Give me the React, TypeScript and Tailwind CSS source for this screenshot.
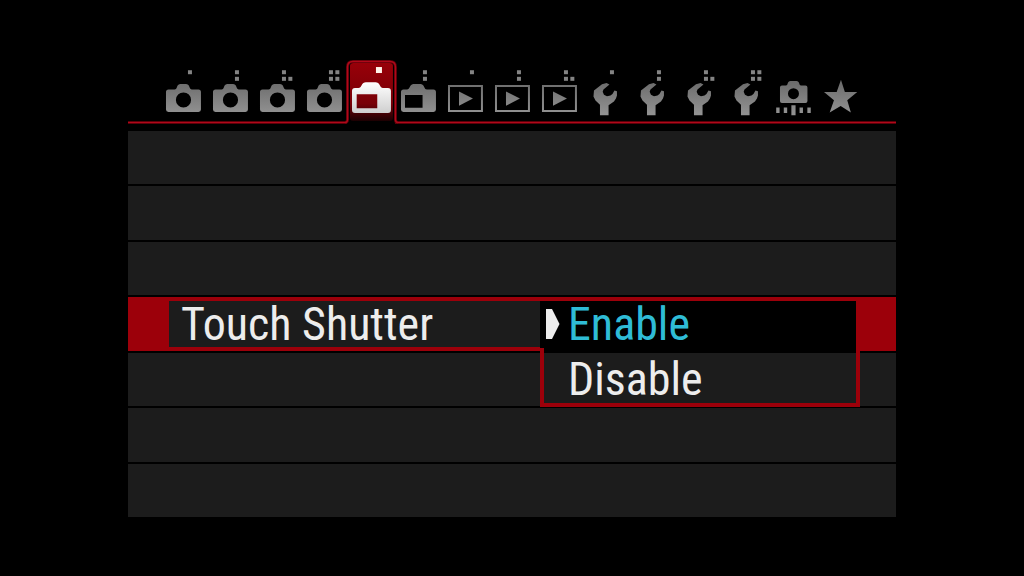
import { useState } from "react";

type IconKind = "camera" | "live" | "play" | "wrench" | "function" | "star";

interface Tab {
  icon: IconKind;
  page: number;
  label: string;
}

const tabs: Tab[] = [
  { icon: "camera", page: 1, label: "Shooting 1" },
  { icon: "camera", page: 2, label: "Shooting 2" },
  { icon: "camera", page: 3, label: "Shooting 3" },
  { icon: "camera", page: 4, label: "Shooting 4" },
  { icon: "live", page: 1, label: "Live View 1" },
  { icon: "live", page: 2, label: "Live View 2" },
  { icon: "play", page: 1, label: "Playback 1" },
  { icon: "play", page: 2, label: "Playback 2" },
  { icon: "play", page: 3, label: "Playback 3" },
  { icon: "wrench", page: 1, label: "Setup 1" },
  { icon: "wrench", page: 2, label: "Setup 2" },
  { icon: "wrench", page: 3, label: "Setup 3" },
  { icon: "wrench", page: 4, label: "Setup 4" },
  { icon: "function", page: 0, label: "Display level" },
  { icon: "star", page: 0, label: "My Menu" },
];

const ACTIVE_TAB = 4;
const options = ["Enable", "Disable"];

// dots stack down first, then fill the right column
const dotLayout: Record<number, [number, number][]> = {
  0: [],
  1: [[28, 10.2]],
  2: [[28, 10.2], [28, 16.8]],
  3: [[28, 10.2], [28, 16.8], [34.4, 16.8]],
  4: [[28, 10.2], [28, 16.8], [34.4, 10.2], [34.4, 16.8]],
};

function Glyph({ kind }: { kind: IconKind }) {
  switch (kind) {
    case "camera":
      return (
        <path
          fillRule="evenodd"
          d="M8.5 29.5H14.5C16 29.5 16.5 28.5 17 27C17.8 24.8 18.8 24 20.5 24H26C27.7 24 28.7 24.8 29.5 27C30 28.5 30.5 29.5 32 29.5H38.5Q41 29.5 41 32V49.5Q41 52 38.5 52H8.5Q6 52 6 49.5V32Q6 29.5 8.5 29.5ZM23.5 32.4A7.6 7.6 0 1 0 23.5 47.6A7.6 7.6 0 1 0 23.5 32.4Z"
        />
      );
    case "live":
      return (
        <path
          fillRule="evenodd"
          d="M8.5 29.5H12C13.5 29.5 14 28.5 14.8 27C16 24.8 17 24 18.5 24H25.5C27.2 24 28.2 24.8 29.2 27C30 28.7 30.5 29.5 32 29.5H38.5Q41 29.5 41 32V49.5Q41 52 38.5 52H8.5Q6 52 6 49.5V32Q6 29.5 8.5 29.5ZM10 35V47.7H27.6V35Z"
        />
      );
    case "play":
      return (
        <>
          <path fillRule="evenodd" d="M6 25H41V52H6ZM8 27V50H39V27Z" />
          <path d="M17 31.5L31 38.5L17 45.8Z" />
        </>
      );
    case "wrench":
      return (
        <path d="M24.6 23L20 24.2L12 30.5L11.5 36.5L13.5 40.5L18 44.7V55.3H26.6V45.3L32 41.5L34 38.5L35 35.5V31.3L32.5 30.5L30.5 34L28.5 35.5L25 36.3L22 34.7L20.7 31.8L21.5 29.5L27.5 24.5Z" />
      );
    case "function":
      return (
        <>
          <path
            fillRule="evenodd"
            d="M12 25.5H16C17 25.5 17.3 24.8 17.6 23.8C18.2 22 19 21 20.5 21H26.5C28 21 28.8 22 29.4 23.8C29.7 24.8 30 25.5 31 25.5H35.5Q37.5 25.5 37.5 27.5V41Q37.5 43 35.5 43H12Q10 43 10 41V27.5Q10 25.5 12 25.5ZM23.5 28.2A5.5 5.5 0 1 0 23.5 39.2A5.5 5.5 0 1 0 23.5 28.2Z"
          />
          <path d="M6.2 47.5H9.6V53H6.2ZM13.8 47.5H17.2V53H13.8ZM21.4 45.3H25.6V55.3H21.4ZM29.6 47.5H33V53H29.6ZM37.4 47.5H40.8V53H37.4Z" />
        </>
      );
    case "star":
      return (
        <path d="M24 19.8L27.9 32H40.3L30.3 40.3L33.9 52.6L23.7 46L12.7 52.6L17 40.3L7 32H19.7Z" />
      );
  }
}

function ActiveTab() {
  return (
    <>
      <rect x="-1" y="2" width="48" height="63" fill="#000" />
      <rect x="2" y="3" width="43" height="58" rx="3" fill="url(#tabRed)" />
      <path
        d="M-3 62.5Q-0.5 62.5 -0.5 59.5V7Q-0.5 1.5 5 1.5H42Q47.5 1.5 47.5 7V59.5Q47.5 62.5 50 62.5"
        fill="none"
        stroke="#5c0009"
        strokeWidth="3"
      />
      <path
        d="M-3 62.5Q-0.5 62.5 -0.5 59.5V7Q-0.5 1.5 5 1.5H42Q47.5 1.5 47.5 7V59.5Q47.5 62.5 50 62.5"
        fill="none"
        stroke="#b0081a"
        strokeWidth="1.4"
      />
      <rect x="28" y="7" width="6" height="6" fill="#fff3ea" />
      <path
        fill="url(#tabWhite)"
        fillRule="evenodd"
        d="M7 28H10.5C12 28 12.8 27 13.5 25.5C14.5 23.2 16 22.3 18 22.3H27.5C29.5 22.3 31 23.2 32 25.5C32.7 27 33.5 28 35 28H40Q43 28 43 31V50Q43 53 40 53H7Q4 53 4 50V31Q4 28 7 28ZM8.7 34.3V48.3H29.3V34.3Z"
      />
    </>
  );
}

function TabIcon({ tab, active }: { tab: Tab; active: boolean }) {
  return (
    <svg viewBox="0 0 47 64" className="h-16 w-full overflow-visible" aria-hidden="true">
      {active ? (
        <ActiveTab />
      ) : (
        <>
          {dotLayout[tab.page].map(([x, y]) => (
            <rect key={`${x}-${y}`} x={x} y={y} width="4" height="4" fill="#848484" />
          ))}
          <g fill="url(#tabGray)">
            <Glyph kind={tab.icon} />
          </g>
        </>
      )}
    </svg>
  );
}

function TabBar() {
  return (
    <div>
      <svg className="absolute h-0 w-0" aria-hidden="true">
        <defs>
          <linearGradient id="tabGray" gradientUnits="userSpaceOnUse" x1="0" y1="22" x2="0" y2="54">
            <stop offset="0" stopColor="#6c6c6c" />
            <stop offset="1" stopColor="#929292" />
          </linearGradient>
          <linearGradient id="tabWhite" x1="0" y1="0" x2="0" y2="1">
            <stop offset="0" stopColor="#ffffff" />
            <stop offset="1" stopColor="#cfcfcf" />
          </linearGradient>
          <linearGradient id="tabRed" x1="0" y1="0" x2="0" y2="1">
            <stop offset="0" stopColor="#980009" />
            <stop offset="0.7" stopColor="#780007" />
            <stop offset="1" stopColor="#1c0002" />
          </linearGradient>
        </defs>
      </svg>
      <div role="tablist" className="relative z-10 flex px-8">
        {tabs.map((tab, i) => (
          <button
            key={tab.label}
            type="button"
            role="tab"
            aria-label={tab.label}
            aria-selected={i === ACTIVE_TAB}
            className="min-w-0 flex-1"
          >
            <TabIcon tab={tab} active={i === ACTIVE_TAB} />
          </button>
        ))}
      </div>
      <div className="-mt-[3px] h-[3px] border-y border-[#5c0009] bg-[#b0081a]" />
    </div>
  );
}

function SettingRow() {
  const [value, setValue] = useState("Enable");

  return (
    <div className="flex bg-[#9c000a] py-1 pr-9 pl-[41px]">
      <div id="setting-label" className="flex flex-1 items-center bg-[#1c1c1c] pl-3">
        Touch Shutter
      </div>
      <div className="relative w-80">
        {/* Open drop-down, hangs over the row below */}
        <div
          role="listbox"
          aria-labelledby="setting-label"
          className="absolute inset-x-0 top-0 z-10"
        >
          {options.map((option, i) => (
            <button
              key={option}
              type="button"
              role="option"
              aria-selected={option === value}
              onClick={() => setValue(option)}
              className={`flex w-full items-center border-[#9c000a] ${
                i === 0 ? "h-[52px] border-r-4 pb-1.5" : "h-[54px] border-x-4 border-b-4 pt-0.5"
              } ${option === value ? "bg-black text-[#2fbcd6]" : "bg-[#1c1c1c]"}`}
            >
              <span className={i === 0 ? "w-7 pl-1.5" : "w-6 pl-0.5"}>
                {option === value && (
                  <svg viewBox="0 0 14 30" className="h-[30px] w-3.5" aria-hidden="true">
                    <path d="M0 0H6L13.5 15L6 30H0Z" fill="#ededed" />
                  </svg>
                )}
              </span>
              {option}
            </button>
          ))}
          <div className="absolute top-[47px] left-0 h-[5px] w-1 bg-[#9c000a]" />
        </div>
      </div>
    </div>
  );
}

export default function App() {
  return (
    <main className="flex min-h-screen flex-col bg-black pt-[60px] pb-[59px] font-['Roboto_Condensed','Open_Sans',sans-serif] text-[46px] leading-10 font-[450] text-[#ededed]">
      <div className="mx-auto flex w-3/4 flex-1 flex-col">
        <TabBar />
        <div className="mt-[7px] grid flex-1 auto-rows-fr gap-0.5">
          <div className="bg-[#1c1c1c]" />
          <div className="bg-[#1c1c1c]" />
          <div className="bg-[#1c1c1c]" />
          <SettingRow />
          <div className="bg-[#1c1c1c]" />
          <div className="bg-[#1c1c1c]" />
          <div className="bg-[#1c1c1c]" />
        </div>
      </div>
    </main>
  );
}
